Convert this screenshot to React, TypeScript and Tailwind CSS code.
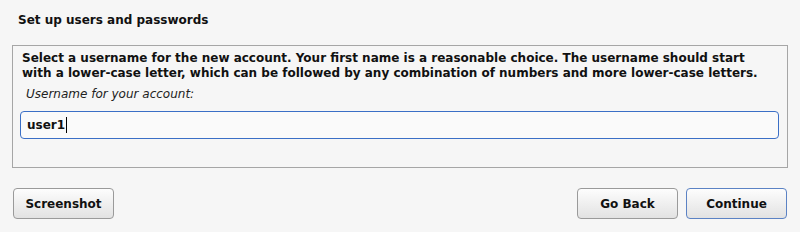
import React from 'react';

function Button({ label, primary }: { label: string; primary?: boolean }) {
  return (
    <button
      className={
        primary
          ? 'h-[31px] w-[101px] rounded-[4px] border border-[#5b82c4] bg-gradient-to-b from-[#fdfdfd] to-[#e2e2e2] text-[12px] font-bold text-[#111]'
          : 'h-[31px] w-[101px] rounded-[4px] border border-[#9a9a9a] bg-gradient-to-b from-[#fdfdfd] to-[#e2e2e2] text-[12px] font-bold text-[#111]'
      }
    >
      {label}
    </button>
  );
}

export default function App() {
  return (
    <div className="h-[232px] w-[800px] bg-[#f6f6f6] font-['DejaVu_Sans',sans-serif] text-[#111]">
      <div className="px-[18px] pt-[12px] text-[12px] font-bold leading-[16px]">Set up users and passwords</div>
      <div className="mx-[12px] mt-[17px] h-[123px] border border-[#a6a6a6] px-[9px] pt-[5px]">
        <p className="whitespace-nowrap text-[12px] font-bold leading-[15px]">
          Select a username for the new account. Your first name is a reasonable choice. The username should start
          <br />
          with a lower-case letter, which can be followed by any combination of numbers and more lower-case letters.
        </p>
        <div className="mt-[5px] pl-[4px] text-[12px] italic leading-[16px] text-[#222]">Username for your account:</div>
        <div className="mt-[9px] mr-[-1px] ml-[-2px] flex h-[28px] items-center rounded-[4px] border border-[#3b6fc6] bg-[#fafafa] px-[6px] text-[12px] font-bold">
          user1<span className="ml-[1px] inline-block h-[16px] w-[1px] bg-black" />
        </div>
      </div>
      <div className="mt-[20px] flex px-[13px] pr-[13px]">
        <Button label="Screenshot" />
        <div className="flex-1" />
        <div className="flex gap-[8px]">
          <Button label="Go Back" />
          <Button label="Continue" primary />
        </div>
      </div>
    </div>
  );
}
